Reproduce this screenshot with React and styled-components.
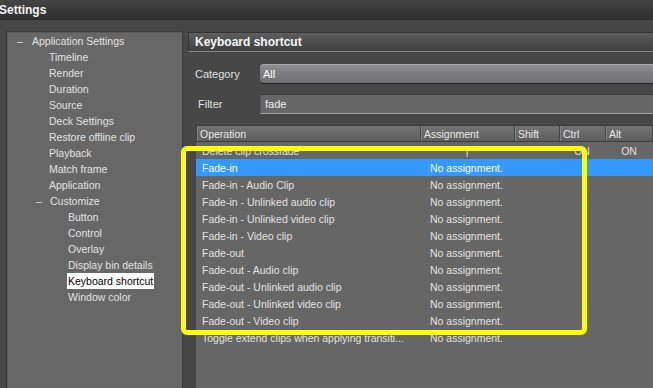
import React from "react";
import styled, { createGlobalStyle } from "styled-components";

const GlobalStyle = createGlobalStyle`
  html, body {
    margin: 0;
    padding: 0;
    background: #474747;
    overflow: hidden;
  }
  body {
    font-family: "Liberation Sans", Arial, sans-serif;
    font-size: 10.5px;
    color: #e4e4e4;
  }
`;

const Window = styled.div`
  width: 653px;
  height: 388px;
  position: relative;
  background: #474747;
  overflow: hidden;
`;

const TitleBar = styled.div`
  height: 19px;
  display: flex;
  align-items: center;
  background: linear-gradient(#444 0%, #3a3a3a 50%, #303030 100%);
  border-bottom: 1px solid #2a2a2a;
  font-size: 12px;
  font-weight: bold;
  color: #f4f4f4;
  text-indent: -1px;
`;

const Body = styled.div`
  display: flex;
  gap: 5px;
  padding: 11px 0 0 6px;
  height: 357px;
`;

const TreePanel = styled.div`
  width: 175px;
  flex-shrink: 0;
  background: #676767;
  border: 1px solid #3a3a3a;
  border-bottom: none;
  box-shadow: inset 1px 1px 0 #5a5a5a;
  padding-top: 1px;
`;

const TreeRow = styled.div`
  height: 16px;
  display: flex;
  align-items: center;
  padding-left: ${(p) => p.$indent}px;
`;

const Toggle = styled.span`
  width: ${(p) => p.$w}px;
  color: #e0e0e0;
`;

const TreeLabel = styled.span`
  padding: 0 1px;
  line-height: 16px;
  background: ${(p) => (p.$selected ? "#ffffff" : "transparent")};
  color: ${(p) => (p.$selected ? "#000" : "#e2e2e2")};
`;

const MainPanel = styled.div`
  flex: 1;
  padding-top: 1px;
  display: flex;
  flex-direction: column;
`;

const SectionHeader = styled.div`
  height: 18px;
  display: flex;
  align-items: center;
  padding-left: 6px;
  background: linear-gradient(#5e5e5e 0%, #4c4c4c 55%, #404040 100%);
  border-top: 1px solid #343434;
  border-left: 1px solid #343434;
  border-bottom: 1px solid #8a8a8a;
  font-size: 12px;
  font-weight: bold;
  color: #f6f6f6;
`;

const FormRow = styled.div`
  display: flex;
  align-items: center;
  margin-top: ${(p) => p.$top}px;
`;

const FieldLabel = styled.div`
  width: ${(p) => 72 - p.$pad}px;
  padding-left: ${(p) => p.$pad}px;
  color: #e0e0e0;
  font-size: 11px;
`;

const Combo = styled.div`
  flex: 1;
  height: 18px;
  display: flex;
  align-items: center;
  padding-left: 3px;
  border-radius: 4px 0 0 4px;
  background: linear-gradient(#8e8e92 0%, #7c7c80 50%, #707074 100%);
  border-top: 1px solid #a8a8aa;
  border-bottom: 1px solid #222;
  color: #fff;
  font-size: 11px;
`;

const TextInput = styled.div`
  flex: 1;
  height: 18px;
  display: flex;
  align-items: center;
  padding-left: 4px;
  background: #666666;
  border-top: 1px solid #3a3a3a;
  border-bottom: 1px solid #a4a4a4;
  border-left: 1px solid #555;
  color: #f0f0f0;
  font-size: 11px;
`;

const Table = styled.div`
  margin: 11px 0 0 8px;
  flex: 1;
  background: #666666;
  display: flex;
  flex-direction: column;
`;

const cols = "224px 94px 45px 46px 1fr";

const HeaderRow = styled.div`
  display: grid;
  grid-template-columns: ${cols};
  height: 15px;
  background: linear-gradient(#737373 0%, #666 60%, #5e5e5e 100%);
  border: 1px solid #3c3c3c;
  border-right: none;
`;

const HeaderCell = styled.div`
  display: flex;
  align-items: center;
  padding-left: 3px;
  border-right: 1px solid #444;
  box-shadow: inset 1px 0 0 #858585;
  color: #e8e8e8;
`;

const Row = styled.div`
  display: grid;
  grid-template-columns: ${cols};
  height: 17px;
  align-items: center;
  background: ${(p) => (p.$selected ? "#3399ff" : "transparent")};
  color: ${(p) => (p.$selected ? "#ffffff" : "#e2e2e2")};
`;

const Cell = styled.div`
  padding-left: ${(p) => (p.$center ? 0 : p.$pad || 6)}px;
  text-align: ${(p) => (p.$center ? "center" : "left")};
  white-space: nowrap;
  overflow: hidden;
`;

const Highlight = styled.div`
  position: absolute;
  left: 181px;
  top: 146px;
  width: 396px;
  height: 179px;
  border: 5px solid #ffff00;
  border-radius: 6px;
  pointer-events: none;
`;

const tree = [
  { label: "Application Settings", indent: 10, toggle: 14 },
  { label: "Timeline", indent: 41 },
  { label: "Render", indent: 41 },
  { label: "Duration", indent: 41 },
  { label: "Source", indent: 41 },
  { label: "Deck Settings", indent: 41 },
  { label: "Restore offline clip", indent: 41 },
  { label: "Playback", indent: 41 },
  { label: "Match frame", indent: 41 },
  { label: "Application", indent: 41 },
  { label: "Customize", indent: 29, toggle: 13 },
  { label: "Button", indent: 60 },
  { label: "Control", indent: 60 },
  { label: "Overlay", indent: 60 },
  { label: "Display bin details", indent: 60 },
  { label: "Keyboard shortcut", indent: 60, selected: true },
  { label: "Window color", indent: 60 },
];

const rows = [
  { op: "Delete clip crossfade", key: "|", ctrl: "ON", alt: "ON" },
  { op: "Fade-in", selected: true },
  { op: "Fade-in - Audio Clip" },
  { op: "Fade-in - Unlinked audio clip" },
  { op: "Fade-in - Unlinked video clip" },
  { op: "Fade-in - Video clip" },
  { op: "Fade-out" },
  { op: "Fade-out - Audio clip" },
  { op: "Fade-out - Unlinked audio clip" },
  { op: "Fade-out - Unlinked video clip" },
  { op: "Fade-out - Video clip" },
  { op: "Toggle extend clips when applying transiti..." },
];

export default function App() {
  return (
    <Window>
      <GlobalStyle />
      <TitleBar>Settings</TitleBar>
      <Body>
        <TreePanel>
          {tree.map((t) => (
            <TreeRow key={t.label} $indent={t.indent}>
              {t.toggle && <Toggle $w={t.toggle}>–</Toggle>}
              <TreeLabel $selected={t.selected}>{t.label}</TreeLabel>
            </TreeRow>
          ))}
        </TreePanel>
        <MainPanel>
          <SectionHeader>Keyboard shortcut</SectionHeader>
          <FormRow $top={12}>
            <FieldLabel $pad={7}>Category</FieldLabel>
            <Combo>All</Combo>
          </FormRow>
          <FormRow $top={10}>
            <FieldLabel $pad={10}>Filter</FieldLabel>
            <TextInput>fade</TextInput>
          </FormRow>
          <Table>
            <HeaderRow>
              <HeaderCell>Operation</HeaderCell>
              <HeaderCell>Assignment</HeaderCell>
              <HeaderCell>Shift</HeaderCell>
              <HeaderCell>Ctrl</HeaderCell>
              <HeaderCell>Alt</HeaderCell>
            </HeaderRow>
            {rows.map((r) => (
              <Row key={r.op} $selected={r.selected}>
                <Cell>{r.op}</Cell>
                {r.key ? (
                  <Cell $center>{r.key}</Cell>
                ) : (
                  <Cell $pad={10}>No assignment.</Cell>
                )}
                <Cell $center />
                <Cell $center>{r.ctrl}</Cell>
                <Cell $center>{r.alt}</Cell>
              </Row>
            ))}
          </Table>
        </MainPanel>
      </Body>
      <Highlight />
    </Window>
  );
}
